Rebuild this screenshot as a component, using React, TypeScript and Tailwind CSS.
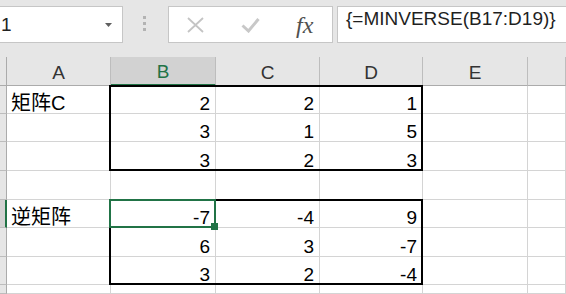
import React from "react";

const colStart = ["col-start-1", "col-start-2", "col-start-3", "col-start-4", "col-start-5", "col-start-6", "col-start-7"];
const rowStart = ["row-start-1", "row-start-2", "row-start-3", "row-start-4", "row-start-5", "row-start-6", "row-start-7", "row-start-8", "row-start-9"];

const columns = ["A", "B", "C", "D", "E", ""];

const rows: string[][] = [
  ["矩阵C", "2", "2", "1", "", ""],
  ["", "3", "1", "5", "", ""],
  ["", "3", "2", "3", "", ""],
  ["", "", "", "", "", ""],
  ["逆矩阵", "-7", "-4", "9", "", ""],
  ["", "6", "3", "-7", "", ""],
  ["", "3", "2", "-4", "", ""],
  ["", "", "", "", "", ""],
];

const FormulaBar = () => (
  <div className="flex h-[57px] items-start pt-[6px]">
    <div className="flex h-[37px] w-[123px] items-center justify-between border border-l-0 border-[#c6c6c6] bg-white pl-[1px] pr-[10px] text-[19px] leading-none text-[#222]">
      <span>1</span>
      <svg width="7" height="4" viewBox="0 0 7 4">
        <path d="M0 0 L7 0 L3.5 4 Z" fill="#5f5f5f" />
      </svg>
    </div>
    <div className="ml-[20px] mt-[10px] flex flex-col gap-[3px]">
      <span className="h-[3px] w-[3px] bg-[#b3b3b3]" />
      <span className="h-[3px] w-[3px] bg-[#b3b3b3]" />
      <span className="h-[3px] w-[3px] bg-[#b3b3b3]" />
    </div>
    <div className="ml-[22px] flex h-[37px] w-[165px] items-center border border-[#c6c6c6] bg-white">
      <svg className="ml-[18px]" width="17" height="16" viewBox="0 0 17 16">
        <path d="M1 1 L16 15 M16 1 L1 15" stroke="#c4c4c4" strokeWidth="1.8" fill="none" />
      </svg>
      <svg className="ml-[37px]" width="19" height="16" viewBox="0 0 19 16">
        <path d="M1.5 8.5 L7.5 14 L17.5 2" stroke="#c8c8c8" strokeWidth="3" fill="none" />
      </svg>
      <span className="ml-[36px] font-['Liberation_Serif',serif] text-[24px] italic leading-none text-[#505050]">
        fx
      </span>
    </div>
    <div className="ml-[4px] flex h-[37px] flex-1 items-start border border-r-0 border-[#c6c6c6] bg-white pl-[8px] pt-[2px] text-[19px] leading-none text-[#1f1f1f]">
      {"{=MINVERSE(B17:D19)}"}
    </div>
  </div>
);

export default function App() {
  return (
    <div className="h-[294px] w-[566px] overflow-hidden bg-[#e6e6e6] font-['Liberation_Sans','Noto_Sans_CJK_SC',sans-serif]">
      <FormulaBar />
      <div className="grid h-[237px] grid-cols-[7px_104px_105px_104px_103px_105px_1fr] grid-rows-[29px_28px_28px_29px_29px_28px_29px_28px_1fr]">
        {/* corner + column headers */}
        <div className="col-start-1 row-start-1 border-r border-b border-[#ababab] bg-[#e6e6e6]" />
        {columns.map((c, i) => (
          <div
            key={c + i}
            className={`${colStart[i + 1]} row-start-1 flex items-center justify-center pt-[2px] text-[19px] leading-none ${
              c === "B"
                ? "border-b-2 border-r border-b-[#217346] border-r-[#bdbdbd] bg-[#d2d2d2] text-[#217346]"
                : "border-b border-r border-b-[#ababab] border-r-[#bdbdbd] bg-[#e6e6e6] text-[#333]"
            }`}
          >
            {c}
          </div>
        ))}

        {/* rows */}
        {rows.map((r, ri) => (
          <React.Fragment key={ri}>
            <div
              className={`col-start-1 ${rowStart[ri + 1]} border-b border-[#bdbdbd] ${
                ri === 4 ? "border-r-2 border-r-[#217346] bg-[#d2d2d2]" : "border-r border-r-[#ababab] bg-[#e6e6e6]"
              }`}
            />
            {r.map((v, ci) => (
              <div
                key={ci}
                className={`${colStart[ci + 1]} ${rowStart[ri + 1]} flex items-end overflow-hidden whitespace-nowrap border-r border-b border-[#d4d4d4] bg-white leading-none text-black ${
                  ci === 0 ? "justify-start pl-[4px] text-[20px]" : "justify-end pr-[5px] text-[19px]"
                }`}
              >
                {v}
              </div>
            ))}
          </React.Fragment>
        ))}

        {/* outlined ranges and the active cell */}
        <div className="pointer-events-none col-start-3 col-end-6 row-start-2 row-end-5 -ml-[2px] -mt-[1px] border-2 border-black" />
        <div className="pointer-events-none col-start-3 col-end-6 row-start-6 row-end-9 -ml-[2px] -mt-[1px] border-2 border-black" />
        <div className="pointer-events-none relative col-start-3 row-start-6 -ml-[2px] -mt-[1px] border-2 border-[#217346]">
          <span className="absolute -right-[4px] -bottom-[4px] h-[7px] w-[7px] bg-[#217346]" />
        </div>
      </div>
    </div>
  );
}
